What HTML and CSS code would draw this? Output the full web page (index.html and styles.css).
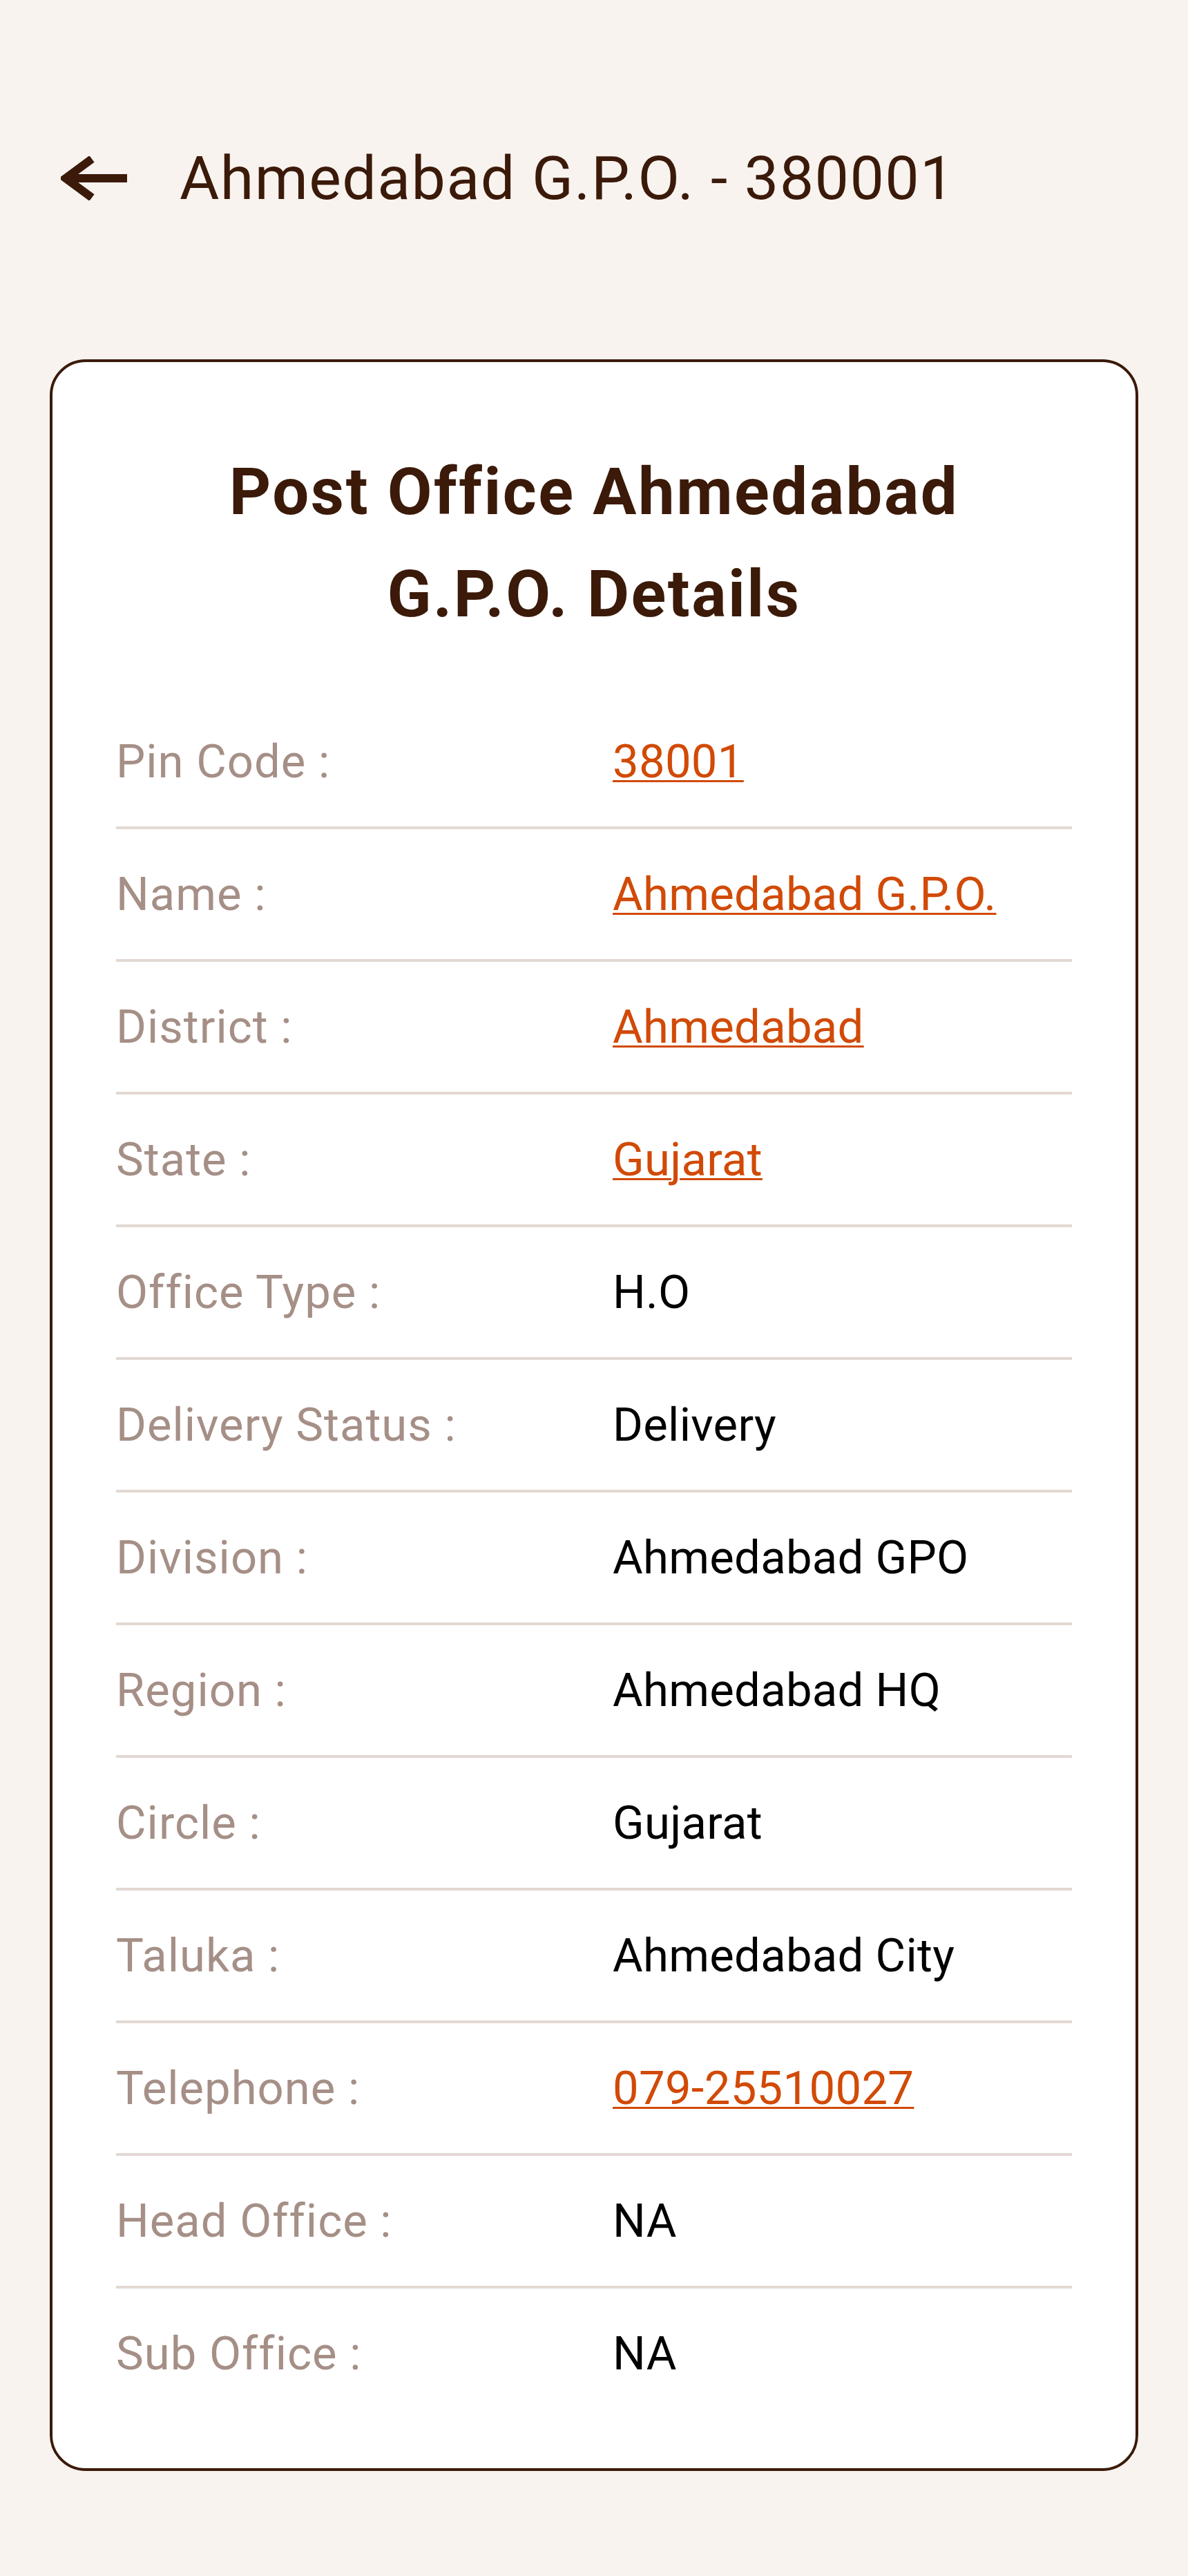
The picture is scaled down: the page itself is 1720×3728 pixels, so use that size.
FILE: index.html
```html
<!DOCTYPE html>
<html lang="en">
<head>
<meta charset="utf-8">
<title>Ahmedabad G.P.O. - 380001</title>
<link rel="stylesheet" href="styles.css">
</head>
<body>
<header class="topbar">
  <a class="back" href="#" aria-label="Back">
    <svg class="back-icon" viewBox="0 0 96 64" width="96" height="64" aria-hidden="true">
      <polyline points="45,4 7,32 45,60" fill="none" stroke="currentColor" stroke-width="12" stroke-linecap="butt" stroke-linejoin="miter"/>
      <line x1="6" y1="32" x2="96" y2="32" stroke="currentColor" stroke-width="12"/>
    </svg>
  </a>
  <h1 class="page-title">Ahmedabad G.P.O. - 380001</h1>
</header>

<main class="card">
  <h2 class="card-title">Post Office Ahmedabad<br>G.P.O. Details</h2>
  <dl class="details">
    <div class="row"><dt class="label">Pin Code :</dt><dd class="value"><a class="link" href="#">38001</a></dd></div>
    <div class="row"><dt class="label">Name :</dt><dd class="value"><a class="link" href="#">Ahmedabad G.P.O.</a></dd></div>
    <div class="row"><dt class="label">District :</dt><dd class="value"><a class="link" href="#">Ahmedabad</a></dd></div>
    <div class="row"><dt class="label">State :</dt><dd class="value"><a class="link" href="#">Gujarat</a></dd></div>
    <div class="row"><dt class="label">Office Type :</dt><dd class="value">H.O</dd></div>
    <div class="row"><dt class="label">Delivery Status :</dt><dd class="value">Delivery</dd></div>
    <div class="row"><dt class="label">Division :</dt><dd class="value">Ahmedabad GPO</dd></div>
    <div class="row"><dt class="label">Region :</dt><dd class="value">Ahmedabad HQ</dd></div>
    <div class="row"><dt class="label">Circle :</dt><dd class="value">Gujarat</dd></div>
    <div class="row"><dt class="label">Taluka :</dt><dd class="value">Ahmedabad City</dd></div>
    <div class="row"><dt class="label">Telephone :</dt><dd class="value"><a class="link" href="#">079-25510027</a></dd></div>
    <div class="row"><dt class="label">Head Office :</dt><dd class="value">NA</dd></div>
    <div class="row"><dt class="label">Sub Office :</dt><dd class="value">NA</dd></div>
  </dl>
</main>
</body>
</html>
```

FILE: styles.css
```css
* { box-sizing: border-box; }

html, body {
  margin: 0;
  padding: 0;
}

body {
  background: #f8f3ef;
  font-family: Roboto, "Noto Sans", "Liberation Sans", sans-serif;
  color: #3b1a09;
}

.topbar {
  display: flex;
  align-items: center;
  gap: 76px;
  padding: 214px 0 0 88px;
}

.back {
  display: flex;
  color: #3b1a09;
}

.back-icon {
  display: block;
}

.page-title {
  margin: 0;
  font-size: 88px;
  line-height: 88px;
  font-weight: 400;
  letter-spacing: 1.4px;
  color: #3b1a09;
}

.card {
  margin: 218px 72px 0;
  background: #ffffff;
  border: 4px solid #3b1a09;
  border-radius: 52px;
  padding: 114px 92px 72px;
}

.card-title {
  margin: 0;
  text-align: center;
  font-size: 94px;
  line-height: 148px;
  font-weight: 700;
  letter-spacing: 2.5px;
  color: #3b1a09;
}

.details {
  margin: 74px 0 0;
  padding: 0;
}

.row {
  display: grid;
  grid-template-columns: 719px 1fr;
  align-items: center;
  height: 192px;
  border-bottom: 4px solid #e2d8d2;
}

.row:last-child {
  border-bottom: none;
  height: 188px;
}

.label,
.value {
  margin: 0;
  font-size: 67px;
  line-height: 80px;
}

.label {
  color: #a58f86;
  letter-spacing: 1px;
}

.value {
  color: #000000;
  letter-spacing: 0.3px;
}

.link {
  color: #d14a07;
  text-decoration: underline;
  text-decoration-thickness: 3px;
  text-underline-offset: 4px;
}
```
